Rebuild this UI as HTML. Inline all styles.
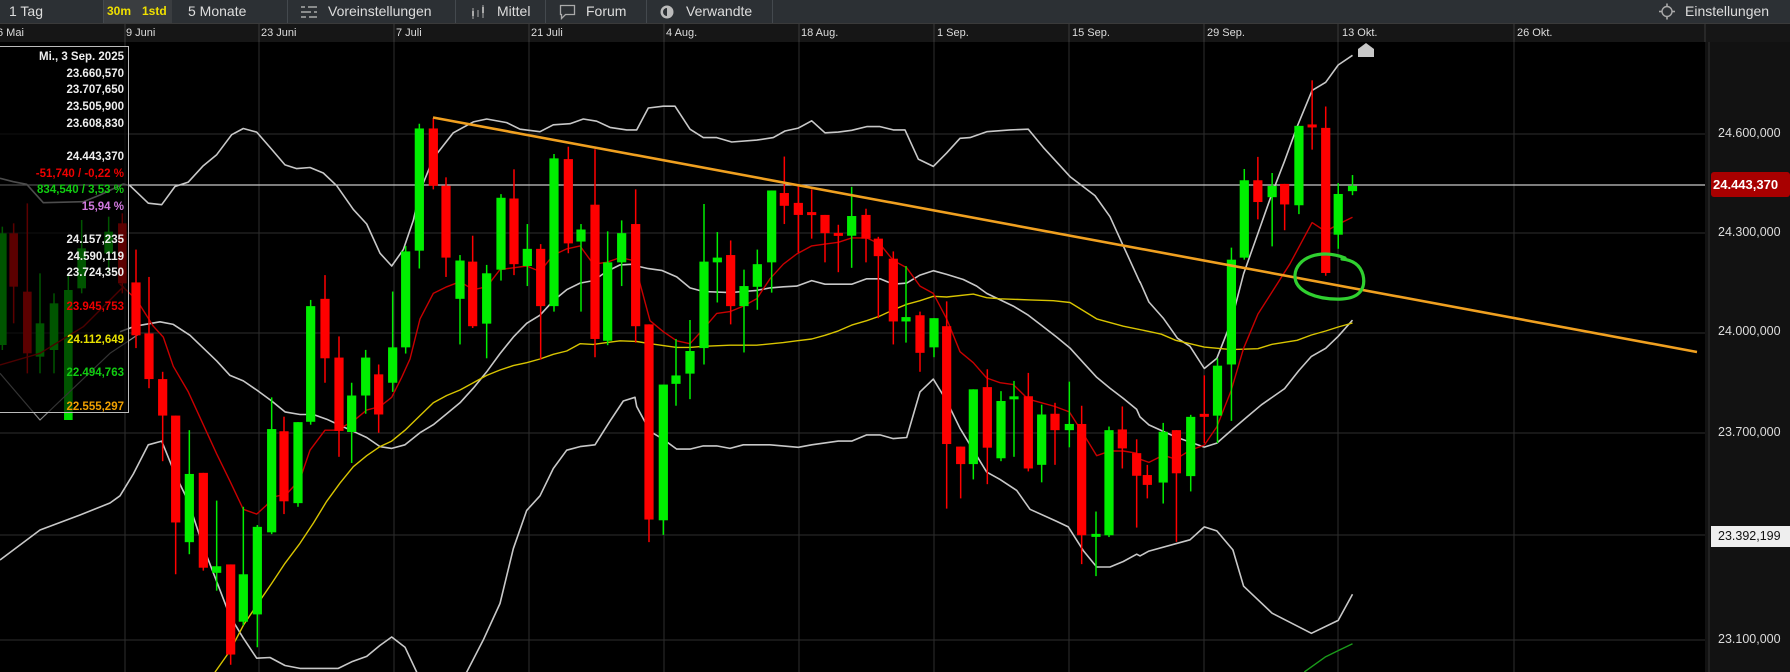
<!DOCTYPE html>
<html><head><meta charset="utf-8">
<style>
html,body{margin:0;padding:0;background:#000;}
body{width:1790px;height:672px;overflow:hidden;position:relative;font-family:"Liberation Sans",Arial,sans-serif;}
svg{overflow:hidden;}
#top{position:absolute;left:0;top:0;width:1790px;height:23px;background:#2c3034;color:#ddd;font-size:14px;}
#top span{position:absolute;top:3px;white-space:nowrap;}
.sep{position:absolute;top:0;width:1px;height:23px;background:#44494e;}
#axis{position:absolute;left:0;top:23px;width:1790px;height:19px;background:#161616;border-top:1px solid #3a3a3a;box-sizing:border-box;}
#axis span{position:absolute;top:3px;font-size:11px;color:#ddd;white-space:nowrap;}
#pax{position:absolute;left:1705px;top:42px;width:85px;height:630px;background:#121212;}
.pl{position:absolute;left:1718px;font-size:12.5px;color:#ddd;}
#panel{position:absolute;left:-1px;top:46px;width:130px;height:367px;border:1px solid #bbb;background:rgba(0,0,0,0.62);box-sizing:border-box;}
#panel div{position:absolute;right:4px;font-size:11.5px;font-weight:bold;white-space:nowrap;}
</style></head><body>
<svg id="ch" width="1790" height="672" viewBox="0 0 1790 672" style="position:absolute;left:0;top:0"></svg>
<div id="pax"></div>
<svg width="1790" height="672" style="position:absolute;left:0;top:0;pointer-events:none">
<line x1="1709" y1="42" x2="1709" y2="672" stroke="#333" stroke-width="1"/>
</svg>
<div class="pl" style="top:126px">24.600,000</div>
<div class="pl" style="top:225px">24.300,000</div>
<div class="pl" style="top:324px">24.000,000</div>
<div class="pl" style="top:425px">23.700,000</div>
<div style="position:absolute;left:1711px;top:526px;width:79px;height:21px;background:#eee;"></div>
<div class="pl" style="top:529px;color:#111">23.392,199</div>
<div class="pl" style="top:632px">23.100,000</div>
<div style="position:absolute;left:1711px;top:172px;width:79px;height:25px;background:#a80000;border-radius:3px;"></div>
<div class="pl" style="top:177px;left:1713px;color:#fff;font-weight:bold;font-size:13px">24.443,370</div>

<div id="panel">
<div style="top:4px;color:#eee">Mi., 3 Sep. 2025</div>
<div style="top:21px;color:#eee">23.660,570</div>
<div style="top:37px;color:#eee">23.707,650</div>
<div style="top:54px;color:#eee">23.505,900</div>
<div style="top:71px;color:#eee">23.608,830</div>
<div style="top:104px;color:#eee">24.443,370</div>
<div style="top:121px;color:#e00">-51,740 / -0,22 %</div>
<div style="top:137px;color:#1c1">834,540 / 3,53 %</div>
<div style="top:154px;color:#d27ae0">15,94 %</div>
<div style="top:187px;color:#eee">24.157,235</div>
<div style="top:204px;color:#eee">24.590,119</div>
<div style="top:220px;color:#eee">23.724,350</div>
<div style="top:254px;color:#e00">23.945,753</div>
<div style="top:287px;color:#e8e000">24.112,649</div>
<div style="top:320px;color:#1c1">22.494,763</div>
<div style="top:354px;color:#f0a000">22.555,297</div>
</div>

<div id="top">
<span style="left:9px">1 Tag</span>
<div class="sep" style="left:103px"></div>
<div style="position:absolute;left:104px;top:0;width:68px;height:23px;background:#3a3d40"></div>
<span style="left:107px;color:#f0e000;font-weight:bold;font-size:12px;top:4px">30m</span>
<span style="left:142px;color:#f0e000;font-weight:bold;font-size:12px;top:4px">1std</span>
<span style="left:188px">5 Monate</span>
<div class="sep" style="left:287px"></div>
<svg style="position:absolute;left:300px;top:4px" width="18" height="15"><g stroke="#aaa" stroke-width="1.5"><line x1="1" y1="3" x2="17" y2="3"/><line x1="1" y1="8" x2="17" y2="8"/><line x1="1" y1="13" x2="17" y2="13"/></g><g fill="#2c3034"><rect x="5" y="1" width="3" height="4"/><rect x="11" y="6" width="3" height="4"/><rect x="6" y="11" width="3" height="4"/></g></svg>
<span style="left:328px">Voreinstellungen</span>
<div class="sep" style="left:455px"></div>
<svg style="position:absolute;left:470px;top:4px" width="18" height="15"><g stroke="#aaa" stroke-width="1"><line x1="3" y1="4" x2="3" y2="15"/><line x1="8" y1="6" x2="8" y2="13"/><line x1="13" y1="1" x2="13" y2="14"/></g><rect x="2" y="7" width="2" height="5" fill="#aaa"/><rect x="12" y="3" width="2" height="6" fill="#aaa"/></svg>
<span style="left:497px">Mittel</span>
<div class="sep" style="left:545px"></div>
<svg style="position:absolute;left:559px;top:4px" width="18" height="16"><path d="M1.5 1.5h14v9h-9l-4 4v-4h-1z" fill="none" stroke="#aaa" stroke-width="1.3"/></svg>
<span style="left:586px">Forum</span>
<div class="sep" style="left:646px"></div>
<svg style="position:absolute;left:659px;top:4px" width="16" height="16"><circle cx="8" cy="8" r="6.5" fill="#bbb"/><path d="M8 4a4 4 0 0 0 0 8z" fill="#2c3034"/></svg>
<span style="left:686px">Verwandte</span>
<div class="sep" style="left:772px"></div>
<svg style="position:absolute;left:1658px;top:3px" width="18" height="17"><circle cx="9" cy="8.5" r="5" fill="none" stroke="#aaa" stroke-width="1.4"/><g stroke="#aaa" stroke-width="1.6"><line x1="9" y1="0.5" x2="9" y2="3"/><line x1="9" y1="14" x2="9" y2="16.5"/><line x1="1" y1="8.5" x2="3.5" y2="8.5"/><line x1="14.5" y1="8.5" x2="17" y2="8.5"/></g></svg>
<span style="left:1685px">Einstellungen</span>
</div>

<div id="axis">
<span style="left:-3px">6 Mai</span>
<span style="left:126px">9 Juni</span>
<span style="left:261px">23 Juni</span>
<span style="left:396px">7 Juli</span>
<span style="left:531px">21 Juli</span>
<span style="left:666px">4 Aug.</span>
<span style="left:801px">18 Aug.</span>
<span style="left:937px">1 Sep.</span>
<span style="left:1072px">15 Sep.</span>
<span style="left:1207px">29 Sep.</span>
<span style="left:1342px">13 Okt.</span>
<span style="left:1517px">26 Okt.</span>
</div>
<svg width="1790" height="42" style="position:absolute;left:0;top:0"><g stroke="#3a3a3a"><line x1="125" y1="24" x2="125" y2="42"/><line x1="259" y1="24" x2="259" y2="42"/><line x1="394" y1="24" x2="394" y2="42"/><line x1="529" y1="24" x2="529" y2="42"/><line x1="664" y1="24" x2="664" y2="42"/><line x1="799" y1="24" x2="799" y2="42"/><line x1="934" y1="24" x2="934" y2="42"/><line x1="1069" y1="24" x2="1069" y2="42"/><line x1="1204" y1="24" x2="1204" y2="42"/><line x1="1338" y1="24" x2="1338" y2="42"/><line x1="1514" y1="24" x2="1514" y2="42"/><line x1="1705" y1="24" x2="1705" y2="42"/></g></svg>

<script>
(function(){
var NS="http://www.w3.org/2000/svg",svg=document.getElementById("ch");
function el(t,a){var e=document.createElementNS(NS,t);for(var k in a)e.setAttribute(k,a[k]);svg.appendChild(e);return e;}
[125,259,394,529,664,799,934,1069,1204,1338,1514].forEach(function(x){el("line",{x1:x,y1:42,x2:x,y2:672,stroke:"#2e2e2e","stroke-width":1});});
[134,233,333,433,535,640].forEach(function(y){el("line",{x1:0,y1:y,x2:1705,y2:y,stroke:"#2e2e2e","stroke-width":1});});
el("line",{x1:0,y1:185,x2:1705,y2:185,stroke:"#c8c8c8","stroke-width":1.2});
var Z={a:[120,3,100,2.741],b:[630,3,100,2.741],c:[1140,2.8,40,2.481],p:[0,3,40,3]};
function P(z,pts){var c=Z[z];return pts.map(function(p){return [c[0]+p[0]/c[1],Math.min(700,c[2]+p[1]/c[3])];});}
function line(arr,col,w){el("polyline",{points:arr.map(function(p){return p[0].toFixed(1)+","+p[1].toFixed(1)}).join(" "),fill:"none",stroke:col,"stroke-width":w,"stroke-linejoin":"round"});}
var dim=[[7,580,915,560,930,'g'],[41,580,740,550,850,'r'],[82,755,940,490,1000,'r'],[120,850,950,700,1000,'g'],[162,790,930,760,1000,'g'],[205,750,1140,700,1140,'g'],[245,625,745,540,760,'g'],[326,575,640,530,700,'g'],[367,550,730,520,760,'r']];
dim.forEach(function(c){var p=P('p',[[c[0],c[1]],[c[0],c[2]],[c[0],c[3]],[c[0],c[4]]]);var col=c[5]=='g'?'#00e000':'#f00000';
el("line",{x1:p[0][0],y1:p[2][1],x2:p[0][0],y2:p[3][1],stroke:col,"stroke-width":1.5});el("rect",{x:p[0][0]-4.3,y:p[0][1],width:8.6,height:Math.max(1.5,p[1][1]-p[0][1]),fill:col});});
var up=[].concat(P('p',[[0,415],[40,425],[80,433],[130,488],[250,485],[300,465],[370,432]]),
P('a',[[30,235],[85,283],[125,287],[165,237],[205,225],[250,180],[290,150],[335,95],[370,78],[410,88],[450,130],[495,178],[530,188],[570,185],[610,200],[650,235],[700,300],[740,340],[780,420],[815,455],[850,410],[880,330],[900,250],[940,160],[1000,90],[1060,60],[1100,52],[1160,62],[1200,80],[1260,87],[1300,68],[1350,65],[1390,52],[1430,58],[1470,75],[1520,82]]),
P('b',[[20,82],[55,22],[100,17],[135,17],[180,80],[220,103],[260,103],[305,115],[380,110],[430,103],[465,85],[505,77],[545,57],[585,90],[625,88],[665,83],[710,73],[750,73],[790,82],[825,82],[865,162],[910,182],[950,145],[990,105],[1020,103],[1070,87],[1140,82],[1195,80],[1240,130],[1320,210],[1395,262],[1440,320],[1480,400],[1530,500]]),
P('c',[[0,600],[25,650],[65,690],[105,740],[140,760],[180,815],[215,790],[255,700],[290,580],[330,480],[370,380],[405,300],[440,215],[482,125],[520,105],[555,62],[595,38]]));
line(up,"#c8c8c8",1.6);
var mid=[].concat(P('a',[[0,635],[45,620],[120,608],[160,615],[210,645],[250,680],[290,715],[330,755],[370,770],[410,795],[455,825],[495,855],[540,862],[580,862],[620,875],[660,892],[700,908],[740,925],[780,950],[815,955],[855,945],[900,912],[940,890],[980,860],[1020,830],[1060,790],[1100,745],[1140,695],[1180,650],[1220,612],[1260,590],[1300,550],[1340,520],[1380,502],[1420,495],[1460,470],[1500,452],[1540,450]]),
P('b',[[20,455],[55,462],[95,467],[140,485],[180,515],[220,525],[300,528],[340,525],[380,522],[420,515],[460,512],[500,510],[545,495],[585,505],[625,505],[665,505],[710,490],[750,490],[790,505],[830,502],[870,480],[910,468],[950,478],[1000,492],[1040,510],[1070,530],[1150,565],[1195,590],[1235,618],[1280,650],[1320,680],[1360,720],[1400,760],[1440,790],[1480,818],[1520,848]]),
P('c',[[0,935],[25,955],[100,985],[180,1010],[215,1000],[260,965],[300,935],[340,905],[405,865],[445,820],[480,785],[520,765],[555,735],[595,695]]));
line(mid,"#c8c8c8",1.6);
var lo=[].concat([[0,560],[40,530],[80,515],[110,503]],P('a',[[0,1085],[40,1025],[85,945],[125,935],[165,1025],[205,1100],[250,1225],[290,1320],[330,1415],[370,1475],[410,1530],[450,1528],[495,1550],[540,1558],[615,1558],[655,1558],[695,1540],[740,1525],[780,1495],[815,1472],[855,1500],[890,1568],[965,1760],[1040,1568],[1090,1480],[1140,1380],[1180,1230],[1220,1125],[1260,1085],[1300,1010],[1340,960],[1380,950],[1425,945],[1470,880],[1510,825],[1545,815]]),
P('b',[[20,840],[60,908],[100,930],[140,957],[180,957],[220,948],[260,948],[300,955],[340,945],[420,945],[505,952],[545,945],[625,935],[665,935],[710,918],[750,918],[790,928],[830,925],[870,800],[910,765],[950,825],[990,900],[1030,960],[1070,1020],[1110,1040],[1160,1070],[1200,1122],[1280,1155],[1315,1170],[1360,1235],[1400,1280],[1440,1280],[1480,1265],[1520,1245]]),
P('c',[[0,1280],[25,1268],[140,1240],[180,1208],[215,1218],[260,1265],[290,1355],[370,1422],[480,1472],[555,1440],[595,1375]]));
line(lo,"#c8c8c8",1.6);
line(P('p',[[0,1000],[120,1140],[330,940],[420,880]]),"#888",1.2);
var ye=[].concat(P('a',[[285,1568],[330,1510],[370,1440],[410,1385],[455,1325],[495,1270],[540,1215],[580,1160],[620,1100],[660,1050],[700,1005],[740,975],[780,950],[815,935],[855,905],[900,865],[940,830],[980,810],[1020,795],[1060,775],[1100,755],[1140,740],[1180,728],[1220,720],[1260,710],[1300,697],[1340,688],[1380,668],[1420,670],[1460,665],[1500,660]]),
P('b',[[20,662],[60,668],[140,678],[180,678],[220,675],[300,672],[380,672],[460,665],[500,660],[545,655],[585,645],[625,633],[665,617],[710,605],[750,592],[790,575],[830,560],[870,550],[910,538],[950,540],[1030,532],[1070,542],[1110,545],[1200,548],[1270,550],[1320,555],[1400,600],[1480,620],[1560,635]]),
P('c',[[60,730],[100,745],[180,762],[255,768],[330,766],[370,755],[440,745],[480,732],[520,722],[555,712],[595,702]]));
line(ye,"#d8c400",1.4);
var rm=[].concat(P('p',[[0,975],[120,940],[250,860],[370,740]]),P('a',[[0,505],[50,548],[100,620],[130,650],[160,730],[205,800],[250,890],[290,970],[330,1045],[370,1122],[410,1135],[440,1110],[460,1088],[500,1080],[540,1040],[570,960],[615,905],[650,905],[700,880],[740,850],[780,840],[815,815],[845,760],[870,710],[900,600],[940,530],[980,512],[1020,498],[1060,520],[1100,512],[1140,465],[1180,460],[1220,455],[1260,470],[1300,425],[1340,408],[1380,400],[1420,450],[1460,445],[1500,432],[1540,440]]),
P('b',[[20,470],[35,520],[60,605],[100,635],[140,660],[180,668],[220,628],[260,585],[300,580],[340,565],[380,545],[420,490],[460,450],[500,422],[545,400],[585,395],[625,390],[665,378],[710,378],[750,395],[790,440],[830,460],[870,510],[910,530],[950,600],[990,690],[1030,720],[1070,762],[1110,775],[1150,780],[1195,820],[1235,830],[1275,840],[1318,855],[1360,915],[1400,975],[1440,962],[1480,962],[1520,968]]),
P('c',[[0,1040],[25,1048],[65,1030],[100,1040],[140,1018],[180,1005],[215,960],[255,870],[290,765],[330,680],[370,625],[420,555],[482,453],[520,475],[555,457],[595,440]]));
line(rm,"#c80000",1.4);
line(P('c',[[460,1568],[520,1530],[555,1515],[595,1498]]),"#1a9a1a",1.4);
function cand(z,list){list.forEach(function(c){var p=P(z,[[c[0],c[1]],[c[0],c[2]],[c[0],c[3]],[c[0],c[4]]]);var col=c[5]=='g'?'#00ee00':'#ff0000';var x=p[0][0];
el("line",{x1:x,y1:p[2][1],x2:x,y2:p[3][1],stroke:col,"stroke-width":1.5});
var h=p[1][1]-p[0][1];el("rect",{x:x-4.6,y:p[0][1]-(h<3?1:0),width:9.2,height:Math.max(3,h),fill:col});});}
cand('a',[[48,500,645,410,680,'r'],[87,640,765,485,790,'r'],[128,765,865,745,990,'r'],[167,865,1158,865,1300,'r'],[208,1025,1212,905,1245,'g'],[250,1022,1282,1022,1290,'r'],[290,1278,1296,1098,1345,'g'],[332,1273,1520,1273,1548,'r'],[370,1300,1430,1115,1440,'g'],[412,1170,1410,1165,1500,'g'],[455,902,1185,815,1190,'g'],[492,908,1100,868,1135,'r'],[534,883,1105,883,1115,'g'],[572,565,882,548,890,'g'],[615,545,708,480,775,'r'],[657,706,907,648,978,'r'],[695,810,910,775,995,'g'],[737,706,810,685,860,'g'],[776,752,862,725,912,'r'],[818,678,775,525,800,'g'],[857,415,678,400,695,'g'],[898,78,413,65,462,'g'],[940,78,235,50,245,'r'],[978,235,432,212,485,'r'],[1020,440,545,425,670,'g'],[1058,443,620,372,625,'r'],[1100,475,613,452,708,'g'],[1143,268,465,258,495,'g'],[1182,270,450,190,480,'r'],[1222,408,455,340,510,'g'],[1262,408,565,395,712,'r'],[1302,160,565,148,580,'g'],[1345,162,393,128,420,'r'],[1383,355,388,340,580,'g'],[1425,287,655,135,705,'r'],[1463,445,660,360,672,'g'],[1505,365,445,330,510,'g'],[1547,340,620,245,665,'r']]);
cand('b',[[57,615,1150,615,1212,'r'],[100,780,1152,780,1192,'g'],[138,755,778,655,838,'g'],[180,688,750,603,820,'g'],[222,443,680,285,725,'g'],[262,432,445,362,555,'g'],[302,425,565,385,615,'r'],[342,510,565,465,692,'g'],[382,450,512,410,575,'g'],[425,248,445,248,528,'g'],[463,255,290,155,340,'r'],[505,282,315,235,418,'r'],[545,310,315,245,380,'r'],[585,315,365,315,445,'r'],[625,367,375,342,472,'r'],[665,318,372,238,460,'g'],[708,315,380,298,445,'r'],[745,380,428,375,598,'r'],[790,435,607,415,670,'r'],[828,595,607,455,665,'g'],[870,590,693,580,745,'r'],[912,598,678,598,705,'g'],[950,620,943,552,1120,'r'],[992,950,998,950,1092,'r'],[1030,793,998,793,1040,'g'],[1072,787,953,738,1053,'r'],[1113,825,982,798,990,'g'],[1152,815,822,770,978,'g'],[1195,812,1010,748,1018,'r'],[1235,862,1000,835,1048,'g'],[1275,860,905,830,1000,'r'],[1318,888,905,772,952,'g'],[1355,888,1193,838,1272,'r'],[1398,1192,1195,1128,1305,'g'],[1437,905,1193,895,1198,'g'],[1477,903,955,840,1010,'r'],[1520,968,1030,930,1172,'r'],[1552,1028,1055,1000,1092,'r']]);
cand('c',[[65,972,1098,950,1150,'g'],[102,968,1075,968,1245,'r'],[142,935,1082,930,1120,'g'],[180,930,933,832,1000,'r'],[217,808,932,790,1000,'g'],[256,545,805,515,945,'g'],[292,348,540,320,545,'g'],[330,348,402,290,445,'r'],[370,362,390,330,512,'g'],[405,357,408,357,472,'r'],[445,213,410,213,432,'g'],[482,212,218,100,272,'r'],[520,218,578,165,585,'r'],[555,382,483,355,518,'g'],[595,362,375,335,385,'g']]);
el("line",{x1:433,y1:117.5,x2:1697,y2:352,stroke:"#f0a020","stroke-width":2.6});
el("path",{d:"M1345,258 C1320,248 1296,258 1295,275 C1294,292 1318,300 1342,299 C1360,298 1366,288 1363,275 C1360,264 1352,260 1342,259",fill:"none",stroke:"#30d030","stroke-width":3.2,"stroke-linecap":"round"});
el("path",{d:"M1358,57 L1358,49 L1366,43 L1374,49 L1374,57 Z",fill:"#c8c8c8"});
})();
</script>
</body></html>
